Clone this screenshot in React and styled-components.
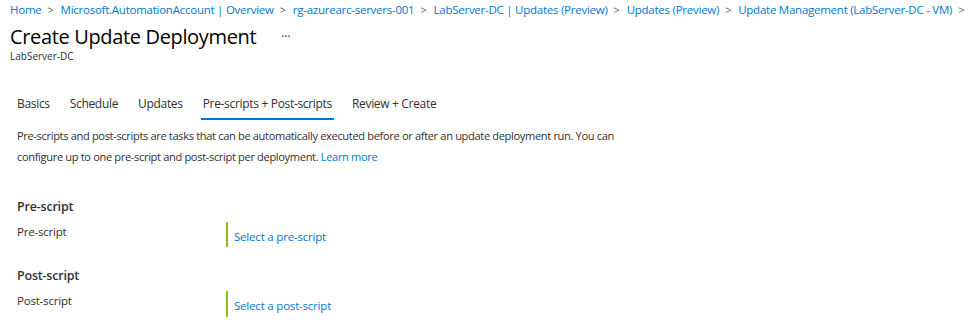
import styled, { createGlobalStyle } from "styled-components";

const GlobalStyle = createGlobalStyle`
  body {
    margin: 0;
    background: #fff;
    font-family: "Open Sans", "Noto Sans", sans-serif;
    color: #323130;
  }
`;

const crumbs = [
  "Home",
  "Microsoft.AutomationAccount | Overview",
  "rg-azurearc-servers-001",
  "LabServer-DC | Updates (Preview)",
  "Updates (Preview)",
  "Update Management (LabServer-DC - VM)",
];

const tabs = ["Basics", "Schedule", "Updates", "Pre-scripts + Post-scripts", "Review + Create"];

const App = () => {
  return (
    <>
      <GlobalStyle />
      <Page>
        <Breadcrumb>
          {crumbs.map((c) => (
            <Crumb key={c}>
              <a>{c}</a>
              <Chevron>&gt;</Chevron>
            </Crumb>
          ))}
        </Breadcrumb>

        <TitleRow>
          <Title>Create Update Deployment</Title>
          <More>···</More>
        </TitleRow>
        <Subtitle>LabServer-DC</Subtitle>

        <Content>
          <Tabs>
            {tabs.map((t) => (
              <Tab key={t} $active={t === "Pre-scripts + Post-scripts"}>
                {t}
              </Tab>
            ))}
          </Tabs>

          <Description>
            Pre-scripts and post-scripts are tasks that can be automatically executed before or after an update deployment run. You can
            <br />
            configure up to one pre-script and post-script per deployment. <Link>Learn more</Link>
          </Description>

          <Section>
            <SectionTitle>Pre-script</SectionTitle>
            <Field>
              <Label>Pre-script</Label>
              <Value>
                <Link>Select a pre-script</Link>
              </Value>
            </Field>
          </Section>

          <Section $second>
            <SectionTitle>Post-script</SectionTitle>
            <Field>
              <Label>Post-script</Label>
              <Value $tall>
                <Link>Select a post-script</Link>
              </Value>
            </Field>
          </Section>
        </Content>
      </Page>
    </>
  );
};

export default App;

const Page = styled.div`
  padding: 0 0 0 10px;
`;

const Breadcrumb = styled.div`
  display: flex;
  align-items: center;
  height: 18px;
  font-size: 11.5px;
  white-space: nowrap;
  letter-spacing: -0.25px;
`;

const Crumb = styled.span`
  display: inline-flex;
  align-items: center;
  color: #0078d4;

  a {
    color: #0078d4;
  }
`;

const Chevron = styled.span`
  color: #605e5c;
  margin: 0 7px 0 6px;
  font-size: 11px;
`;

const TitleRow = styled.div`
  display: flex;
  align-items: center;
  margin-top: 4px;
  height: 28px;
`;

const Title = styled.h1`
  margin: 0;
  font-size: 20px;
  font-weight: 400;
  color: #000;
  letter-spacing: -0.35px;
`;

const More = styled.span`
  margin-left: 25px;
  font-size: 12px;
  color: #323130;
`;

const Subtitle = styled.div`
  font-size: 10px;
  color: #323130;
  margin-top: -1px;
`;

const Content = styled.div`
  padding-left: 7px;
`;

const Tabs = styled.div`
  display: flex;
  margin-top: 28px;
  margin-left: -2px;
`;

const Tab = styled.div`
  font-size: 12px;
  color: #323130;
  padding: 4px 2px 6px;
  margin-right: 16px;
  letter-spacing: -0.32px;
  border-bottom: 2px solid ${(p) => (p.$active ? "#0078d4" : "transparent")};
`;

const Description = styled.p`
  margin: 5px 0 0;
  width: 700px;
  font-size: 11.1px;
  line-height: 21px;
  color: #323130;
  letter-spacing: -0.35px;
  white-space: nowrap;
`;

const Link = styled.a`
  color: #0078d4;
  cursor: pointer;
`;

const Section = styled.div`
  margin-top: ${(p) => (p.$second ? "20px" : "31px")};
`;

const SectionTitle = styled.div`
  font-size: 12.5px;
  font-weight: 600;
  color: #323130;
  letter-spacing: -0.2px;
`;

const Field = styled.div`
  display: grid;
  grid-template-columns: 209px 1fr;
  margin-top: 8px;
`;

const Label = styled.div`
  font-size: 11.5px;
  color: #323130;
  letter-spacing: -0.2px;
  padding-top: 1px;
`;

const Value = styled.div`
  border-left: 2px solid #8cbd18;
  height: ${(p) => (p.$tall ? "26px" : "25px")};
  margin-top: -1px;
  padding-left: 6px;
  display: flex;
  align-items: flex-end;
  font-size: 11.5px;
  letter-spacing: -0.2px;
  padding-bottom: ${(p) => (p.$tall ? "4px" : "3px")};
  box-sizing: border-box;
`;
